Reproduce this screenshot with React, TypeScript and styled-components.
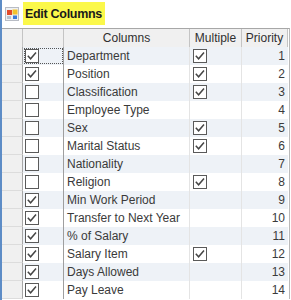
import React from "react";
import styled, { createGlobalStyle } from "styled-components";

const Global = createGlobalStyle`
  html, body { margin: 0; padding: 0; background: #ffffff; }
  body { font-family: "Liberation Sans", Arial, sans-serif; }
`;

const Page = styled.div`
  width: 291px;
  height: 300px;
  overflow: hidden;
  background: #fff;
  border-left: 2px solid #5d8cc6;
  box-sizing: border-box;
`;

const TitleBar = styled.div`
  height: 28px;
  display: flex;
  align-items: center;
  padding-left: 3px;
  gap: 4px;
`;

const Title = styled.span`
  background: #fbf84a;
  font-weight: bold;
  font-size: 12.5px;
  color: #1a1a1a;
  letter-spacing: -0.3px;
  padding: 5px 3px 4px 2px;
  line-height: 14px;
  margin-top: -1px;
`;

const Grid = styled.div`
  display: grid;
  grid-template-columns: 21px 41px 126px 52px 46px;
  grid-auto-rows: 18px;
  width: 287px;
  border-top: 1px solid #a7a7a7;
  border-right: 1px solid #b9b9b9;
  font-size: 12px;
  color: #3a3a3a;
`;

const HeadCell = styled.div<{ $first?: boolean }>`
  height: 19px;
  box-sizing: border-box;
  background: #f0f0f0;
  border-bottom: 1px solid #a7a7a7;
  border-right: 1px solid #c4c4c4;
  display: flex;
  align-items: center;
  justify-content: center;
  color: #2f2f2f;
  font-size: 12px;
`;

const RowHead = styled.div`
  background: #f0f0f0;
  border-bottom: 1px solid #dcdcdc;
  border-right: 1px solid #a7a7a7;
  box-sizing: border-box;
`;

const Cell = styled.div<{ $alt: boolean; $align?: string; $focus?: boolean }>`
  background: ${(p) => (p.$alt ? "#eef2f7" : "#ffffff")};
  border-right: 1px solid #e4e4e4;
  box-sizing: border-box;
  display: flex;
  align-items: center;
  justify-content: ${(p) => p.$align || "flex-start"};
  padding: 0 3px 0 3px;
  white-space: nowrap;
  overflow: hidden;
  position: relative;
  ${(p) => (p.$focus ? "outline: 1px dotted #555; outline-offset: -2px;" : "")}
`;

const CheckCell = styled(Cell)`
  border-right: 1px solid #9f9f9f;
  padding-left: 2px;
`;

const NumCell = styled(Cell)`
  padding-right: 3px;
  border-right: none;
`;

const Box = styled.svg`
  width: 14px;
  height: 14px;
  display: block;
`;

const CheckBox: React.FC<{ checked: boolean }> = ({ checked }) => (
  <Box viewBox="0 0 14 14">
    <rect x="0.5" y="0.5" width="13" height="13" fill="#fff" stroke="#5a5a5a" strokeWidth="1" />
    {checked && (
      <path d="M2.8 6.8 L5.6 9.8 L11 3.6" fill="none" stroke="#454545" strokeWidth="1.5" />
    )}
  </Box>
);

const AppIcon = () => (
  <svg width="14" height="14" viewBox="0 0 14 14">
    <rect x="0.5" y="0.5" width="13" height="13" fill="#eef0f3" stroke="#b8bcc4" />
    <rect x="2" y="3" width="5" height="5" fill="#e24a2a" />
    <rect x="7.5" y="2.5" width="5" height="5" fill="#f3c22c" />
    <rect x="8" y="8.5" width="4" height="3.5" fill="#3d7bd6" />
    <rect x="2" y="9" width="4" height="3" fill="#b9c3cf" />
  </svg>
);

type Row = { name: string; show: boolean; multiple: boolean | null };

const rows: Row[] = [
  { name: "Department", show: true, multiple: true },
  { name: "Position", show: true, multiple: true },
  { name: "Classification", show: false, multiple: true },
  { name: "Employee Type", show: false, multiple: null },
  { name: "Sex", show: false, multiple: true },
  { name: "Marital Status", show: false, multiple: true },
  { name: "Nationality", show: false, multiple: null },
  { name: "Religion", show: false, multiple: true },
  { name: "Min Work Period", show: true, multiple: null },
  { name: "Transfer to Next Year", show: true, multiple: null },
  { name: "% of Salary", show: true, multiple: null },
  { name: "Salary Item", show: true, multiple: true },
  { name: "Days Allowed", show: true, multiple: null },
  { name: "Pay Leave", show: true, multiple: null },
];

export default function App() {
  return (
    <>
      <Global />
      <Page>
        <TitleBar>
          <AppIcon />
          <Title>Edit Columns</Title>
        </TitleBar>
        <Grid>
          <HeadCell />
          <HeadCell />
          <HeadCell>Columns</HeadCell>
          <HeadCell>Multiple</HeadCell>
          <HeadCell>Priority</HeadCell>
          {rows.map((r, i) => {
            const alt = i % 2 === 0;
            return (
              <React.Fragment key={r.name}>
                <RowHead />
                <CheckCell $alt={alt} $focus={i === 0}>
                  <CheckBox checked={r.show} />
                </CheckCell>
                <Cell $alt={alt}>{r.name}</Cell>
                <Cell $alt={alt}>{r.multiple !== null && <CheckBox checked={r.multiple} />}</Cell>
                <NumCell $alt={alt} $align="flex-end">{i + 1}</NumCell>
              </React.Fragment>
            );
          })}
        </Grid>
      </Page>
    </>
  );
}
